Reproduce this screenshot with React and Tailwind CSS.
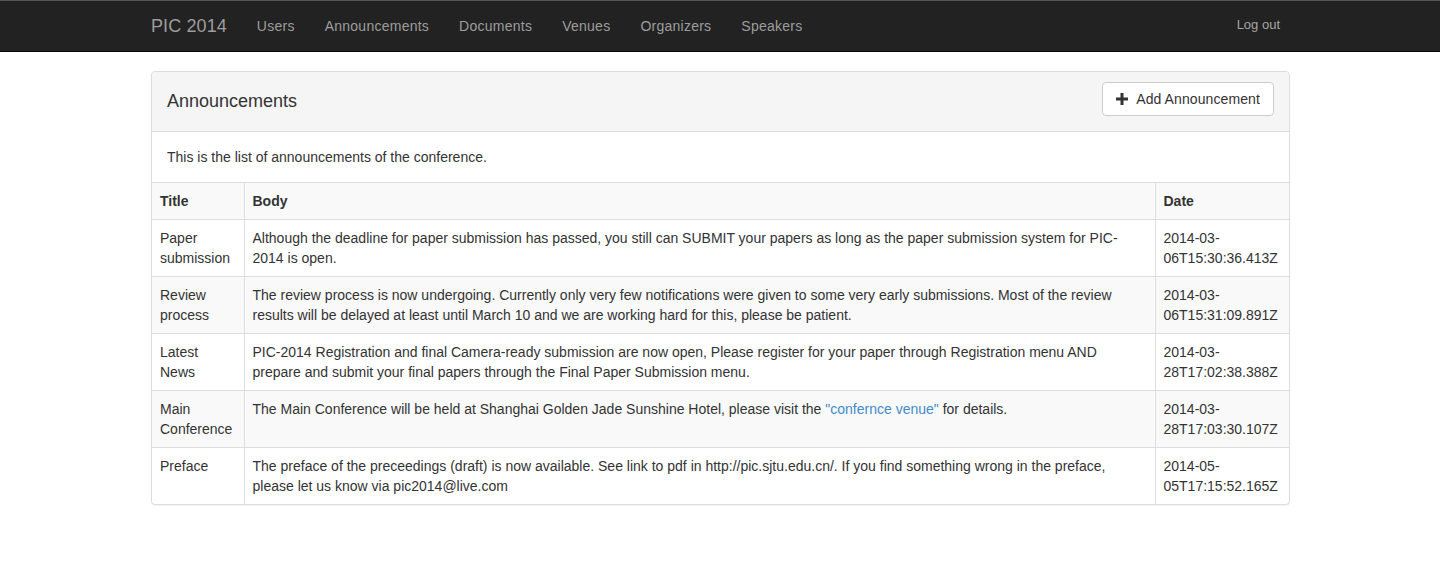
import React from 'react';

const navLinks = ['Users', 'Announcements', 'Documents', 'Venues', 'Organizers', 'Speakers'];

const announcements = [
  {
    title: 'Paper submission',
    body: 'Although the deadline for paper submission has passed, you still can SUBMIT your papers as long as the paper submission system for PIC-2014 is open.',
    date: '2014-03-06T15:30:36.413Z',
  },
  {
    title: 'Review process',
    body: 'The review process is now undergoing. Currently only very few notifications were given to some very early submissions. Most of the review results will be delayed at least until March 10 and we are working hard for this, please be patient.',
    date: '2014-03-06T15:31:09.891Z',
  },
  {
    title: 'Latest News',
    body: 'PIC-2014 Registration and final Camera-ready submission are now open, Please register for your paper through Registration menu AND prepare and submit your final papers through the Final Paper Submission menu.',
    date: '2014-03-28T17:02:38.388Z',
  },
  {
    title: 'Main Conference',
    body: (
      <>
        The Main Conference will be held at Shanghai Golden Jade Sunshine Hotel, please visit the{' '}
        <a href="#" className="text-[#428bca]">"confernce venue"</a> for details.
      </>
    ),
    date: '2014-03-28T17:03:30.107Z',
  },
  {
    title: 'Preface',
    body: 'The preface of the preceedings (draft) is now available. See link to pdf in http://pic.sjtu.edu.cn/. If you find something wrong in the preface, please let us know via pic2014@live.com',
    date: '2014-05-05T17:15:52.165Z',
  },
];

const PlusIcon = () => (
  <svg width="12" height="12" viewBox="0 0 12 12" className="shrink-0">
    <rect x="4.5" y="0" width="3" height="12" fill="#333" />
    <rect x="0" y="4.5" width="12" height="3" fill="#333" />
  </svg>
);

const App = () => {
  const cell = 'border-[#ddd] p-[8px] align-top leading-[20px]';

  return (
    <div className="min-h-[571px] bg-white text-[14px] leading-[20px] text-[#333]" style={{ fontFamily: '"Liberation Sans", Arial, sans-serif' }}>
      {/* Inverse navbar */}
      <nav className="border-t border-t-[#555] border-b border-b-[#080808] bg-[#222]">
        <div className="mx-auto flex h-[50px] w-[1140px] items-center">
          <a href="#" className="pl-px pr-[15px] text-[18px] leading-[20px] tracking-[0.1px] text-[#9d9d9d]">PIC 2014</a>
          <ul className="flex">
            {navLinks.map((label) => (
              <li key={label}>
                <a href="#" className="block px-[15px] py-[15px] tracking-[0.25px] text-[#9d9d9d]">{label}</a>
              </li>
            ))}
          </ul>
          <a href="#" className="ml-auto mr-[10px] mb-[3px] text-[13px] text-[#a5a5a5]">Log out</a>
        </div>
      </nav>

      <div className="mx-auto mt-[19px] w-[1140px] pl-px">
        <div className="overflow-hidden rounded-[4px] border border-[#ddd] bg-white shadow-[0_1px_1px_rgba(0,0,0,0.05)]">
          <div className="flex h-[60px] items-start justify-between border-b border-[#ddd] bg-[#f5f5f5] px-[15px]">
            <h3 className="mt-[19px] text-[18px] font-medium leading-[20px] text-[#333]">Announcements</h3>
            <button className="mt-[10px] flex h-[34px] items-center gap-[8px] rounded-[4px] border border-[#ccc] bg-white px-[13px] text-[14px] tracking-[0.1px] text-[#333]">
              <PlusIcon />
              Add Announcement
            </button>
          </div>

          <div className="p-[15px]">This is the list of announcements of the conference.</div>

          <table className="w-full table-fixed border-collapse border-t border-[#ddd]">
            <colgroup>
              <col className="w-[92px]" />
              <col />
              <col className="w-[134px]" />
            </colgroup>
            <tbody>
              <tr className="bg-[#f9f9f9]">
                <th className={`${cell} border-r text-left font-bold`}>Title</th>
                <th className={`${cell} border-r text-left font-bold`}>Body</th>
                <th className={`${cell} text-left font-bold`}>Date</th>
              </tr>
              {announcements.map((a, i) => (
                <tr key={a.date} className={`border-t border-[#ddd] ${i % 2 === 1 ? 'bg-[#f9f9f9]' : ''}`}>
                  <td className={`${cell} border-r`}>{a.title}</td>
                  <td className={`${cell} border-r`}>{a.body}</td>
                  <td className={cell}>{a.date}</td>
                </tr>
              ))}
            </tbody>
          </table>
        </div>
      </div>
    </div>
  );
};

export default App;
